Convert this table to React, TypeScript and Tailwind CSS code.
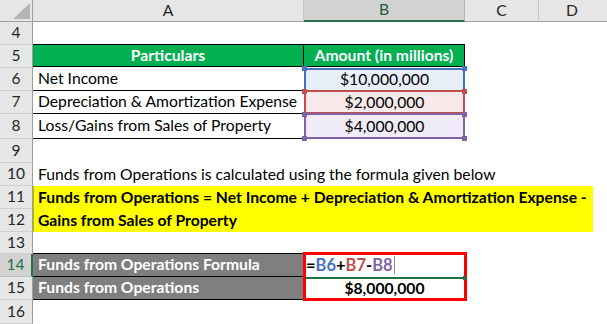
import React from 'react';

const FONT = { fontFamily: 'Lato, "Open Sans", sans-serif' };

const RowHead: React.FC<{ n: number; h: string; active?: boolean }> = ({ n, h, active }) => (
  <div
    className={`${h} w-[33px] shrink-0 flex items-center justify-center text-[15.5px] font-normal border-b border-r ${
      active
        ? 'bg-[#d2d2d2] text-[#217346] border-b-[#bdbdbd] border-r-2 border-r-[#217346]'
        : 'bg-[#e6e6e6] text-[#262626] border-b-[#d0d0d0] border-r-[#9e9e9e]'
    }`}
  >
    {n}
  </div>
);

const Handle: React.FC<{ pos: string; color: string }> = ({ pos, color }) => (
  <div className={`absolute w-[5px] h-[5px] ${pos} ${color}`} />
);

const App: React.FC = () => {
  return (
    <div className="w-[607px] h-[324px] bg-white overflow-hidden text-[15.7px] text-black" style={FONT}>
      {/* column header */}
      <div className="flex h-[22px]">
        <div className="w-[33px] h-full bg-[#e6e6e6] border-r border-b border-[#9e9e9e] relative">
          <svg className="absolute right-[2px] bottom-[2px]" width="17" height="16" viewBox="0 0 17 16">
            <polygon points="17,0 17,16 0,16" fill="#b4b4b4" />
          </svg>
        </div>
        <div className="w-[271px] h-full bg-[#e6e6e6] border-r border-b border-r-[#c8c8c8] border-b-[#9e9e9e] flex items-center justify-center text-[#262626]">A</div>
        <div className="w-[161px] h-full bg-[#d2d2d2] border-r border-r-[#b4b4b4] border-b-2 border-b-[#217346] flex items-center justify-center text-[#1f5a36]">B</div>
        <div className="w-[74px] h-full bg-[#e6e6e6] border-r border-b border-r-[#c8c8c8] border-b-[#9e9e9e] flex items-center justify-center text-[#262626]">C</div>
        <div className="flex-1 h-full bg-[#e6e6e6] border-b border-b-[#9e9e9e] flex items-center justify-center text-[#262626] pr-[2px]">D</div>
      </div>

      {/* row 4 */}
      <div className="flex">
        <RowHead n={4} h="h-[23px]" />
      </div>

      {/* row 5 */}
      <div className="flex">
        <RowHead n={5} h="h-[23px]" />
        <div className="w-[271px] h-[23px] bg-[#00b050] border-t border-r border-b border-black flex items-center justify-center text-white font-bold -mt-px">
          Particulars
        </div>
        <div className="w-[161px] h-[23px] bg-[#00b050] border-t border-r border-b border-black flex items-center justify-center text-white font-bold -mt-px">
          Amount (in millions)
        </div>
      </div>

      {/* rows 6-8 */}
      <div className="flex">
        <div className="flex flex-col">
          <RowHead n={6} h="h-[23px]" />
          <RowHead n={7} h="h-[23px]" />
          <RowHead n={8} h="h-[25px]" />
        </div>
        <div className="flex flex-col w-[271px]">
          <div className="h-[23px] border-b border-black flex items-center pl-[5px]">Net Income</div>
          <div className="h-[23px] border-b border-black flex items-center pl-[5px] whitespace-nowrap">Depreciation &amp; Amortization Expense</div>
          <div className="h-[25px] border-b border-black flex items-center pl-[5px]">Loss/Gains from Sales of Property</div>
        </div>
        <div className="relative flex flex-col w-[161px]">
          <div className="h-[23px] bg-[#e9eff9] flex items-center justify-center">$10,000,000</div>
          <div className="h-[23px] bg-[#f8e9ea] flex items-center justify-center">$2,000,000</div>
          <div className="h-[25px] bg-[#efebf7] flex items-center justify-center">$4,000,000</div>

          {/* formula reference highlights */}
          <div className="absolute left-0 top-0 w-[161px] h-[24px] border-2 border-[#4472c4]" />
          <Handle pos="-left-[2px] -top-[2px]" color="bg-[#4472c4]" />
          <Handle pos="-right-[2px] -top-[2px]" color="bg-[#4472c4]" />

          <div className="absolute left-0 top-[22px] w-[161px] h-[24px] border-2 border-[#c0504d]" />
          <Handle pos="-left-[2px] top-[21px]" color="bg-[#c0504d]" />
          <Handle pos="-right-[2px] top-[21px]" color="bg-[#c0504d]" />

          <div className="absolute left-0 top-[45px] w-[161px] h-[26px] border-2 border-[#8064a2]" />
          <Handle pos="-left-[2px] top-[44px]" color="bg-[#8064a2]" />
          <Handle pos="-right-[2px] top-[44px]" color="bg-[#8064a2]" />
          <Handle pos="-left-[2px] top-[68px]" color="bg-[#8064a2]" />
          <Handle pos="-right-[2px] top-[68px]" color="bg-[#8064a2]" />
        </div>
      </div>

      {/* row 9 */}
      <div className="flex">
        <RowHead n={9} h="h-[24px]" />
      </div>

      {/* row 10 */}
      <div className="flex">
        <RowHead n={10} h="h-[23px]" />
        <div className="h-[23px] flex items-center pl-[5px] whitespace-nowrap">
          Funds from Operations is calculated using the formula given below
        </div>
      </div>

      {/* rows 11-12 */}
      <div className="flex">
        <div className="flex flex-col">
          <RowHead n={11} h="h-[23px]" />
          <RowHead n={12} h="h-[23px]" />
        </div>
        <div className="w-[560px] bg-[#ffff00] font-bold pl-[4px] border-l border-[#b8b800]">
          <div className="h-[23px] flex items-center whitespace-nowrap">
            Funds from Operations = Net Income + Depreciation &amp; Amortization Expense -
          </div>
          <div className="h-[23px] flex items-center">Gains from Sales of Property</div>
        </div>
      </div>

      {/* row 13 */}
      <div className="flex">
        <RowHead n={13} h="h-[22px]" />
      </div>

      {/* rows 14-15 */}
      <div className="flex">
        <div className="flex flex-col">
          <RowHead n={14} h="h-[23px]" active />
          <RowHead n={15} h="h-[23px]" />
        </div>
        <div className="flex flex-col w-[271px] bg-[#7f7f7f] text-white font-bold border-t border-black -mt-px">
          <div className="h-[23px] border-b border-black flex items-center pl-[5px]">Funds from Operations Formula</div>
          <div className="h-[23px] border-b border-black flex items-center pl-[5px]">Funds from Operations</div>
        </div>
        <div className="relative flex flex-col w-[161px] -mt-px">
          <div className="h-[24px] flex items-center pl-[2px] font-bold text-[16.5px]">
            <span>=</span>
            <span className="text-[#4472c4]">B6</span>
            <span>+</span>
            <span className="text-[#c0504d]">B7</span>
            <span>-</span>
            <span className="text-[#8064a2]">B8</span>
            <span className="ml-[1px] w-px h-[18px] bg-[#8c8c8c]" />
          </div>
          <div className="h-[23px] flex items-center justify-center font-bold">$8,000,000</div>
          <div className="absolute left-0 top-[24px] w-[161px] h-[2px] bg-[#217346]" />
          <div className="absolute -left-[1px] -top-px w-[164px] h-[49px] border-[3px] border-[#ff0000]" />
          <div className="absolute right-[-1px] top-[23px] w-[3px] h-[4px] bg-[#217346]" />
        </div>
      </div>

      {/* row 16 */}
      <div className="flex">
        <RowHead n={16} h="h-[24px]" />
      </div>
    </div>
  );
};

export default App;
